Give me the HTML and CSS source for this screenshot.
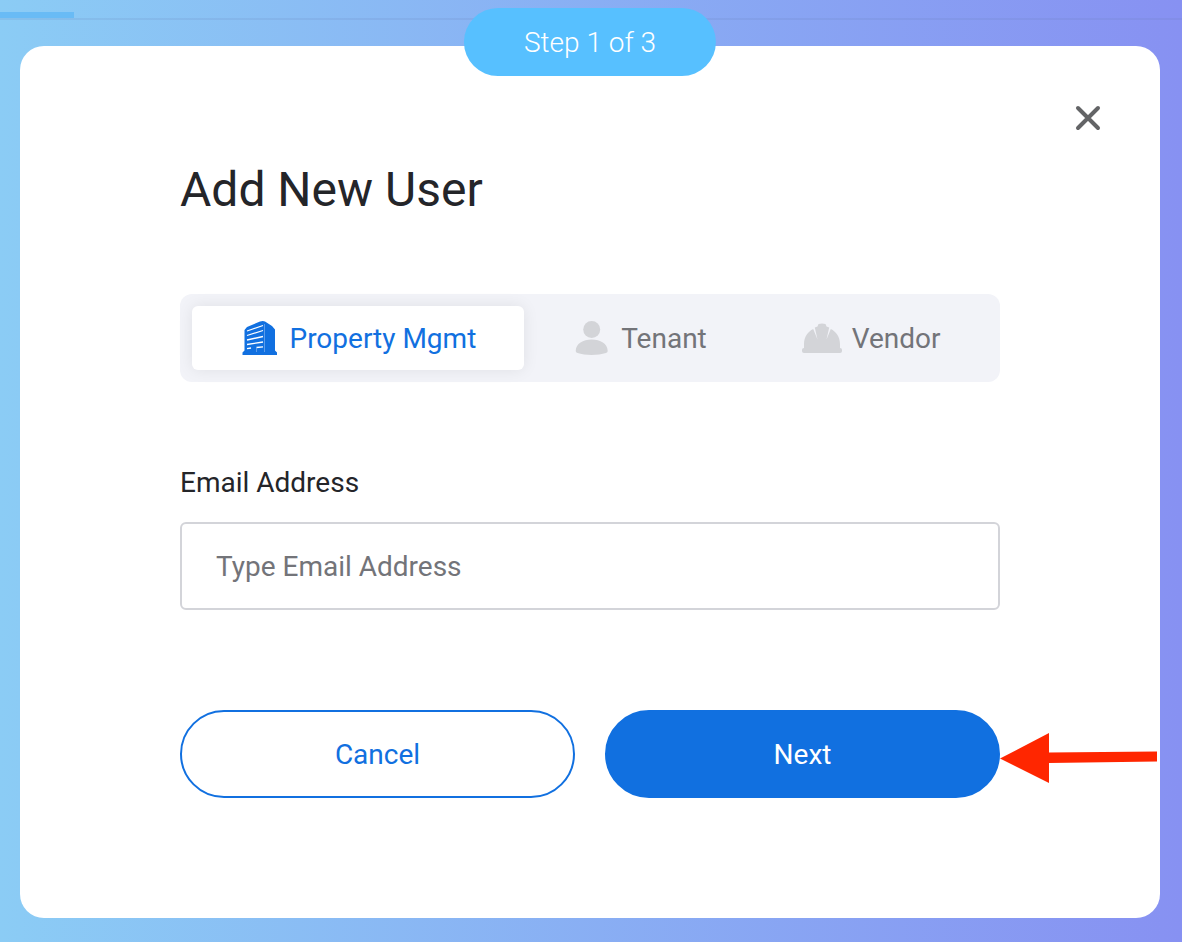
FILE: index.html
```html
<!DOCTYPE html>
<html lang="en">
<head>
    <meta charset="utf-8">
    <title>Add New User</title>
    <link rel="stylesheet" href="styles.css">
</head>
<body>
    <div class="page-header"></div>

    <div class="modal" role="dialog" aria-labelledby="modalTitle">
        <div class="step-badge">Step 1 of 3</div>

        <button type="button" class="close-btn" aria-label="Close">
            <svg width="28" height="28" viewBox="0 0 28 28">
                <path d="M4 4L24 24M24 4L4 24" stroke="#636466" stroke-width="4" stroke-linecap="round"/>
            </svg>
        </button>

        <h1 id="modalTitle">Add New User</h1>

        <div class="user-types">
            <button type="button" class="user-type active">
                <svg width="40" height="40" viewBox="0 0 40 40">
                    <path fill="currentColor" d="M5.500 12L8 9L21 3.500Q24 2.500 26 3.500L33 8L36 11.500V32.500L38 34.500V37H3.500V34.500L5.500 32.500Z"/>
                    <path stroke="#fff" stroke-width="1.300" fill="none" d="M8 13L24 7.500M8 17.500L24 12.500M8 22L24 18.500M8 26.500L24 24M8 30.700L12 30M17.500 29.500L24 28.800"/>
                    <path stroke="#5b9cea" stroke-width="1" fill="none" d="M25.500 6V34M17.500 30V34"/>
                </svg>
                Property Mgmt
            </button>
            <button type="button" class="user-type">
                <svg width="40" height="40" viewBox="0 0 40 40">
                    <g fill="#d3d4d8">
                        <circle cx="20.700" cy="11.500" r="8.500"/>
                        <path d="M4.700 33C5 25.500 12 21.500 20.700 21.500S36.500 25.500 36.700 33Q36.700 34.500 35 35C27 37.500 14 37.500 6.500 35Q4.700 34.500 4.700 33Z"/>
                    </g>
                </svg>
                Tenant
            </button>
            <button type="button" class="user-type">
                <svg width="40" height="40" viewBox="0 0 40 40">
                    <g fill="#d3d4d8">
                        <rect x="0" y="30" width="40" height="5" rx="2"/>
                        <path d="M2 31V26C2 19 6 13.500 11.200 11L15.500 21.500L12.800 9.500L15.500 8.500L16.500 6Q20 5 23.500 6L24.500 8.500L27.200 9.500L24.500 21.500L28.800 11C34 13.500 38 19 38 26V31Z"/>
                    </g>
                </svg>
                Vendor
            </button>
        </div>

        <form id="addUserForm">
            <label for="email">Email Address</label>
            <input type="email" id="email" placeholder="Type Email Address">

            <div class="actions">
                <button type="button" class="btn btn-cancel">Cancel</button>
                <button type="submit" class="btn btn-next">Next</button>
                <svg class="arrow" width="158" height="50" viewBox="0 0 158 50">
                    <path fill="#ff2600" d="M0 25.500L49 0V19.500L157 18.500V28.500L49 30V50Z"/>
                </svg>
            </div>
        </form>
    </div>
</body>
</html>
```
FILE: styles.css
```css
* {
    box-sizing: border-box;
}
body {
    margin: 0;
    padding: 46px 22px 24px 20px;
    min-height: 100vh;
    font-family: Roboto, sans-serif;
    font-size: 28px;
    line-height: 34px;
    color: #242529;
    background: linear-gradient(to right, #8bccf5, #8791f2);
}
button,
input {
    font: inherit;
}
button {
    cursor: pointer;
}

/* strip of the page behind the modal */
.page-header {
    position: absolute;
    top: 0;
    left: 0;
    right: 0;
    height: 20px;
    border-bottom: 2px solid rgba(100, 120, 180, 0.14);
}
.page-header::before {
    content: "";
    position: absolute;
    left: 0;
    bottom: 0;
    width: 74px;
    height: 6px;
    background: #69bbf5;
}

.modal {
    position: relative;
    padding: 112px 160px 120px;
    background: #fff;
    border-radius: 24px;
}
.step-badge {
    position: absolute;
    top: -38px;
    left: 50%;
    transform: translateX(-50%);
    padding: 18px 60px 16px;
    border-radius: 34px;
    background: #57c0ff;
    color: #fff;
    font-weight: 300;
    white-space: nowrap;
}
.close-btn {
    position: absolute;
    top: 58px;
    right: 58px;
    padding: 0;
    border: none;
    background: none;
}
.close-btn svg {
    display: block;
}
h1 {
    margin: 0 0 72px;
    font-size: 48px;
    line-height: 64px;
    font-weight: 400;
}

.user-types {
    display: flex;
    margin-bottom: 84px;
    padding: 12px;
    border-radius: 12px;
    background: #f2f3f8;
}
.user-type {
    display: flex;
    flex: 1 1 auto;
    align-items: center;
    justify-content: center;
    gap: 10px;
    height: 64px;
    padding: 2px 0 0;
    border: none;
    border-radius: 6px;
    background: none;
    color: #737479;
}
.user-type svg {
    margin-bottom: 2px;
}
.user-type.active {
    background: #fff;
    color: #1170e0;
    box-shadow: 0 0 16px rgba(0, 0, 0, 0.08);
}

label {
    display: block;
    margin-bottom: 22px;
}
input {
    display: block;
    width: 100%;
    height: 88px;
    margin-bottom: 100px;
    padding: 0 34px;
    border: 2px solid #d3d4d9;
    border-radius: 6px;
    color: #242529;
}
input::placeholder {
    color: #737479;
}

.actions {
    position: relative;
    display: flex;
    gap: 30px;
}
.btn {
    flex: 1;
    height: 88px;
    padding: 2px 0 0;
    border: 2px solid #1170e0;
    border-radius: 44px;
}
.btn-cancel {
    background: #fff;
    color: #1170e0;
}
.btn-next {
    background: #1170e0;
    color: #fff;
}
.arrow {
    position: absolute;
    top: 23px;
    left: 100%;
}
```
